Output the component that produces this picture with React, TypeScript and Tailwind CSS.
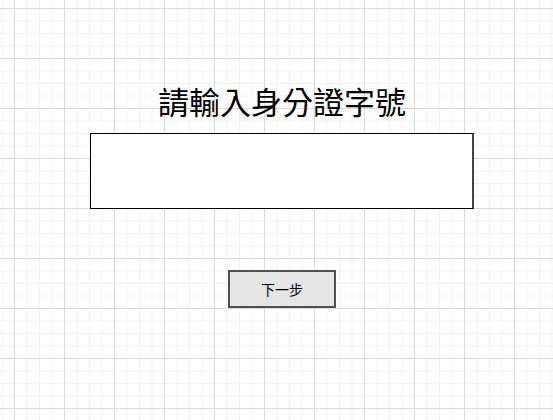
import React from 'react'

const App = () => {
    return (
        <div className="min-h-screen w-full bg-white bg-[linear-gradient(to_right,#dadada_1px,transparent_1px),linear-gradient(to_bottom,#dadada_1px,transparent_1px),linear-gradient(to_right,#f3f3f3_1px,transparent_1px),linear-gradient(to_bottom,#f3f3f3_1px,transparent_1px)] bg-[size:50px_50px,50px_50px,12.5px_12.5px,12.5px_12.5px] bg-[position:14px_8px,14px_8px,14px_8px,14px_8px] pt-[86px] pl-[90px]">
            <div className="w-[384px] flex flex-col items-center">
                {/* title */}
                <h1 className="text-[31px] leading-[36px] text-black font-['Liberation_Serif','Noto_Sans_CJK_TC',serif]">
                    請輸入身分證字號
                </h1>
                {/* id input */}
                <input
                    type="text"
                    className="mt-[11px] w-[384px] h-[76px] bg-white border border-black border-r-2 border-r-[#444] outline-none px-2 text-xl"
                />
                {/* next button */}
                <button className="mt-[61px] w-[108px] h-[38px] bg-[#e5e5e5] border-2 border-[#505050] text-[14px] text-black font-['Noto_Sans_CJK_TC',sans-serif]">
                    下一步
                </button>
            </div>
        </div>
    )
}

export default App
